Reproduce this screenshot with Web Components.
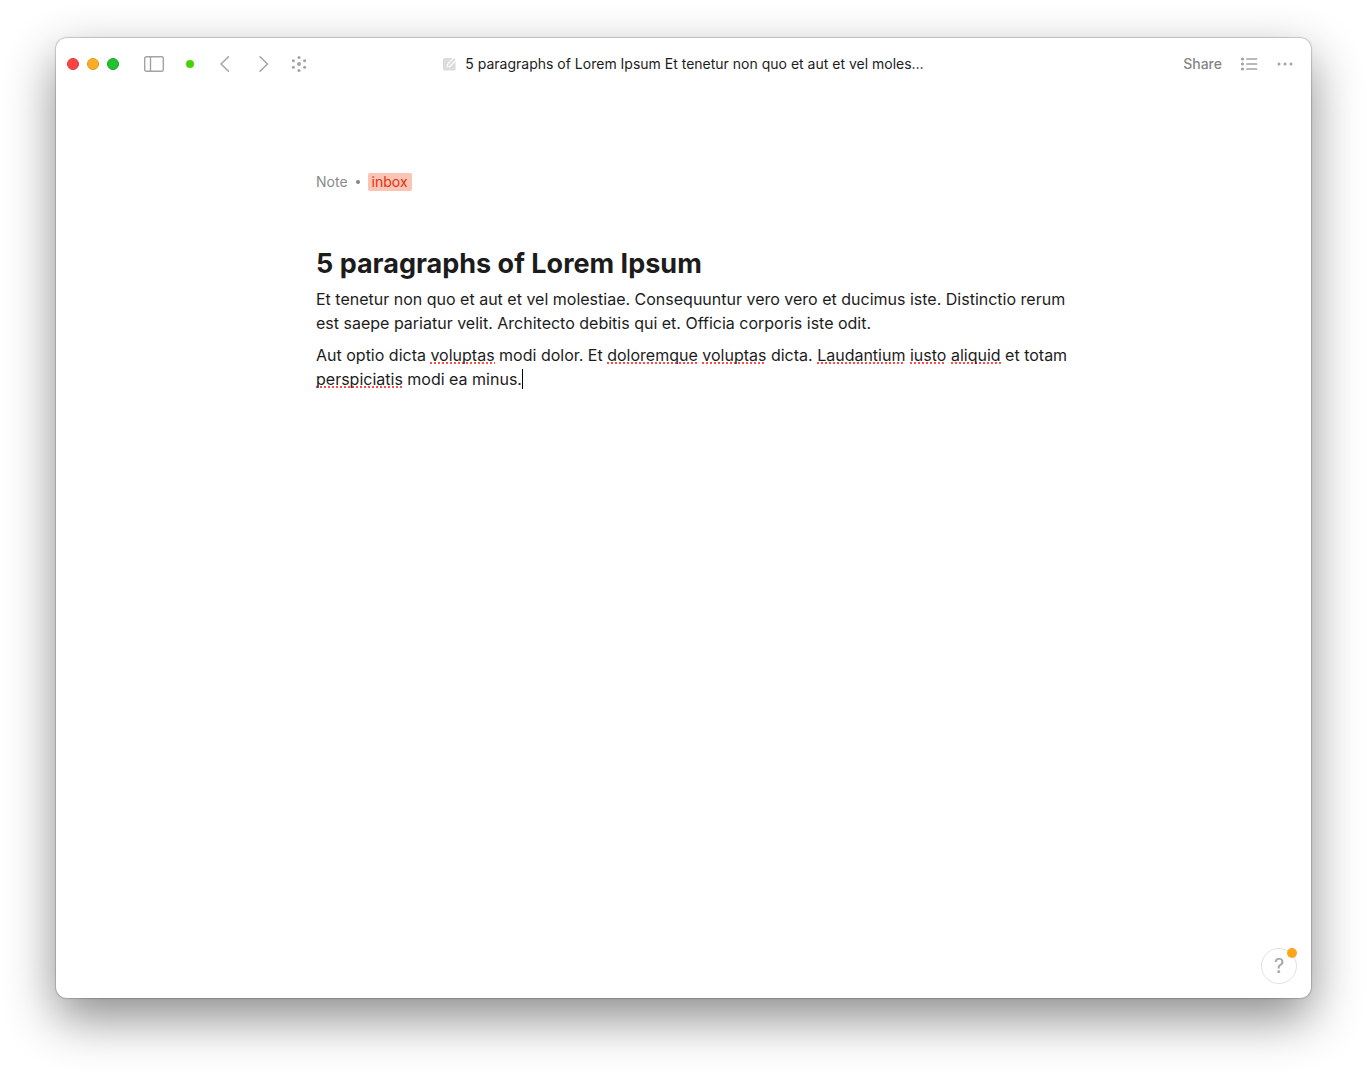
<!DOCTYPE html>
<html lang="en">
<head>
<meta charset="utf-8">
<meta name="viewport" content="width=device-width, initial-scale=1">
<title>5 paragraphs of Lorem Ipsum</title>
<style>
body {
  margin: 0;
  background: #fff;
  color: #1c1c1c;
  font-family: Inter, "Liberation Sans", sans-serif;
  font-size: 16px;
  line-height: 24px;
}
</style>
</head>
<body>
<app-window>
  <title-bar slot="bar">
    <traffic-lights slot="start"></traffic-lights>
    <nav-tools slot="start"></nav-tools>
    <doc-title>5 paragraphs of Lorem Ipsum Et tenetur non quo et aut et vel moles…</doc-title>
    <doc-actions slot="end"></doc-actions>
  </title-bar>
  <note-page>
    <note-meta slot="meta" data-type="Note" data-tag="inbox"></note-meta>
    <span slot="title">5 paragraphs of Lorem Ipsum</span>
    <note-paragraph>Et tenetur non quo et aut et vel molestiae. Consequuntur vero vero et ducimus iste. Distinctio rerum est saepe pariatur velit. Architecto debitis qui et. Officia corporis iste odit.</note-paragraph>
    <note-paragraph>Aut optio dicta <spell-error>voluptas</spell-error> modi dolor. Et <spell-error>doloremque</spell-error> <spell-error>voluptas</spell-error> dicta. <spell-error>Laudantium</spell-error> <spell-error>iusto</spell-error> <spell-error>aliquid</spell-error> et totam <spell-error>perspiciatis</spell-error> modi ea minus.<text-caret></text-caret></note-paragraph>
  </note-page>
  <help-button slot="help"></help-button>
</app-window>

<script>
const buttonStyles = `
button {
  display: flex;
  align-items: center;
  justify-content: center;
  margin: 0;
  padding: 0;
  border: 0;
  background: none;
  color: #a3a3a3;
  font: inherit;
}

svg {
  display: block;
}
`;

class AppWindow extends HTMLElement {
  constructor() {
    super();
    this.attachShadow({ mode: "open" });
  }

  connectedCallback() {
    this.shadowRoot.innerHTML = `
<style>
:host {
  display: flex;
  box-sizing: border-box;
  min-height: 100vh;
  padding: 38px 56px 74px;
  overflow: hidden;
}

.window {
  position: relative;
  display: flex;
  flex-direction: column;
  flex: 1;
  min-width: 0;
  background: #fff;
  border-radius: 11px;
  box-shadow: 0 0 1px 1px rgba(0, 0, 0, 0.18), 0 20px 50px rgba(0, 0, 0, 0.46);
}

.help {
  position: absolute;
  right: 14px;
  bottom: 14px;
}
</style>
<div class="window">
  <slot name="bar"></slot>
  <slot></slot>
  <div class="help"><slot name="help"></slot></div>
</div>
`;
  }
}

class TitleBar extends HTMLElement {
  constructor() {
    super();
    this.attachShadow({ mode: "open" });
  }

  connectedCallback() {
    this.shadowRoot.innerHTML = `
<style>
:host {
  display: block;
}

header {
  display: grid;
  grid-template-columns: 1fr auto 1fr;
  align-items: center;
  height: 52px;
  padding: 0 11px;
}

.start {
  display: flex;
  align-items: center;
  gap: 25px;
}

.end {
  display: flex;
  justify-content: flex-end;
  padding-right: 6px;
}
</style>
<header>
  <div class="start"><slot name="start"></slot></div>
  <slot></slot>
  <div class="end"><slot name="end"></slot></div>
</header>
`;
  }
}

class TrafficLights extends HTMLElement {
  constructor() {
    super();
    this.attachShadow({ mode: "open" });
  }

  connectedCallback() {
    this.shadowRoot.innerHTML = `
<style>
${buttonStyles}
:host {
  display: flex;
  gap: 8px;
}

button {
  box-sizing: border-box;
  width: 12px;
  height: 12px;
  border: 1px solid #e33536;
  border-radius: 50%;
  background: #fe4343;
}

.minimize {
  border-color: #e09a1d;
  background: #fdad24;
}

.zoom {
  border-color: #17a525;
  background: #24c131;
}
</style>
<button aria-label="Close"></button>
<button class="minimize" aria-label="Minimize"></button>
<button class="zoom" aria-label="Zoom"></button>
`;
  }
}

class NavTools extends HTMLElement {
  constructor() {
    super();
    this.attachShadow({ mode: "open" });
  }

  connectedCallback() {
    this.shadowRoot.innerHTML = `
<style>
${buttonStyles}
:host {
  display: flex;
  align-items: center;
}

.status {
  width: 8px;
  height: 8px;
  margin: 0 25px 0 22px;
  border-radius: 50%;
  background: #46d305;
}

.arrows {
  display: flex;
  gap: 22px;
  margin-right: 18px;
}
</style>
<button aria-label="Toggle sidebar">
  <svg width="20" height="16" viewBox="0 0 20 16" fill="none" stroke="currentColor" stroke-width="1.4">
    <rect x="0.7" y="0.7" width="18.6" height="14.6" rx="1.6"/>
    <path d="M6.5 1v14"/>
  </svg>
</button>
<span class="status"></span>
<div class="arrows">
  <button aria-label="Back">
    <svg width="16" height="18" viewBox="0 0 16 18" fill="none" stroke="currentColor" stroke-width="1.5" stroke-linecap="round" stroke-linejoin="round">
      <path d="M9.5 1.7L2 9l7.5 7.3"/>
    </svg>
  </button>
  <button aria-label="Forward">
    <svg width="16" height="18" viewBox="0 0 16 18" fill="none" stroke="currentColor" stroke-width="1.5" stroke-linecap="round" stroke-linejoin="round">
      <path d="M3 1.7L10.5 9 3 16.3"/>
    </svg>
  </button>
</div>
<button aria-label="Graph">
  <svg width="16" height="16" viewBox="0 0 16 16" fill="currentColor">
    <circle cx="8" cy="8" r="2"/>
    <circle cx="8" cy="1.6" r="1.5"/>
    <circle cx="8" cy="14.4" r="1.5"/>
    <circle cx="2.4" cy="4.8" r="1.5"/>
    <circle cx="13.6" cy="4.8" r="1.5"/>
    <circle cx="2.4" cy="11.2" r="1.5"/>
    <circle cx="13.6" cy="11.2" r="1.5"/>
  </svg>
</button>
`;
  }
}

class DocTitle extends HTMLElement {
  constructor() {
    super();
    this.attachShadow({ mode: "open" });
  }

  connectedCallback() {
    this.shadowRoot.innerHTML = `
<style>
:host {
  display: flex;
  align-items: center;
  gap: 8px;
  min-width: 0;
  font-size: 14px;
  line-height: 20px;
  white-space: nowrap;
}

svg {
  display: block;
}
</style>
<svg width="14" height="14" viewBox="0 0 14 14" aria-hidden="true">
  <rect x="0" y="1" width="12.6" height="12.4" rx="1.6" fill="#dcdcdc"/>
  <path d="M13.4 0.4L5 9.2" stroke="#fff" stroke-width="4.4"/>
  <path d="M4 10l.9-3 6.300-6.200 1.800 1.800L7 9z" fill="#dcdcdc" stroke="#fff" stroke-width="0.8"/>
</svg>
<span><slot></slot></span>
`;
  }
}

class DocActions extends HTMLElement {
  constructor() {
    super();
    this.attachShadow({ mode: "open" });
  }

  connectedCallback() {
    this.shadowRoot.innerHTML = `
<style>
${buttonStyles}
:host {
  display: flex;
  align-items: center;
  gap: 18px;
}

.share {
  color: #858585;
  font-size: 14px;
  font-weight: 500;
  line-height: 20px;
}
</style>
<button class="share">Share</button>
<button aria-label="Outline">
  <svg width="18" height="16" viewBox="0 0 18 16" fill="currentColor">
    <circle cx="2.5" cy="3" r="1.6"/>
    <circle cx="2.5" cy="8" r="1.6"/>
    <circle cx="2.5" cy="13" r="1.6"/>
    <path d="M7 3h9.500M7 8h9.500M7 13h9.500" stroke="currentColor" stroke-width="1.7" stroke-linecap="round"/>
  </svg>
</button>
<button aria-label="More">
  <svg width="18" height="16" viewBox="0 0 18 16" fill="currentColor">
    <circle cx="3" cy="8" r="1.5"/>
    <circle cx="9" cy="8" r="1.5"/>
    <circle cx="15" cy="8" r="1.5"/>
  </svg>
</button>
`;
  }
}

class NotePage extends HTMLElement {
  constructor() {
    super();
    this.attachShadow({ mode: "open" });
  }

  connectedCallback() {
    this.shadowRoot.innerHTML = `
<style>
:host {
  display: block;
  flex: 1;
  padding: 83px 24px;
}

article {
  max-width: 735px;
  margin: 0 auto;
}

h1 {
  margin: 53px 0 3px;
  font-size: 27px;
  font-weight: 700;
  line-height: 40px;
}

.body {
  display: flex;
  flex-direction: column;
  gap: 8px;
  margin-right: -24px;
}
</style>
<article>
  <slot name="meta"></slot>
  <h1><slot name="title"></slot></h1>
  <div class="body"><slot></slot></div>
</article>
`;
  }
}

class NoteMeta extends HTMLElement {
  constructor() {
    super();
    this.attachShadow({ mode: "open" });
  }

  connectedCallback() {
    this.shadowRoot.innerHTML = `
<style>
:host {
  display: flex;
  align-items: center;
  gap: 8px;
  color: #8a8a8a;
  font-size: 14px;
  line-height: 18px;
}

.dot {
  width: 4px;
  height: 4px;
  border-radius: 50%;
  background: #858585;
}

a {
  padding: 0 4px;
  border-radius: 2px;
  background: #fbc5b5;
  color: #e0310b;
  text-decoration: none;
}
</style>
<span>${this.getAttribute("data-type")}</span>
<span class="dot"></span>
<a href="#inbox">${this.getAttribute("data-tag")}</a>
`;
  }
}

class NoteParagraph extends HTMLElement {
  constructor() {
    super();
    this.attachShadow({ mode: "open" });
  }

  connectedCallback() {
    this.shadowRoot.innerHTML = `
<style>
:host {
  display: block;
}

p {
  margin: 0;
}
</style>
<p><slot></slot></p>
`;
  }
}

class SpellError extends HTMLElement {
  constructor() {
    super();
    this.attachShadow({ mode: "open" });
  }

  connectedCallback() {
    // Inline element: whitespace around the slot would show up as a space
    this.shadowRoot.innerHTML = `<style>
:host {
  background: repeating-linear-gradient(90deg, #fb4b4b 0 2px, transparent 2px 4px) left bottom 1px / 100% 2px no-repeat;
}
</style><slot></slot>`;
  }
}

class TextCaret extends HTMLElement {
  constructor() {
    super();
    this.attachShadow({ mode: "open" });
  }

  connectedCallback() {
    this.shadowRoot.innerHTML = `<style>
:host {
  display: inline-block;
  width: 1px;
  height: 20px;
  background: #000;
  vertical-align: -4px;
}
</style>`;
  }
}

class HelpButton extends HTMLElement {
  constructor() {
    super();
    this.attachShadow({ mode: "open" });
  }

  connectedCallback() {
    this.shadowRoot.innerHTML = `
<style>
${buttonStyles}
:host {
  display: block;
  position: relative;
}

button {
  box-sizing: border-box;
  width: 36px;
  height: 36px;
  border: 1px solid #e2e2e2;
  border-radius: 50%;
  background: #fff;
  font-size: 20px;
}

.badge {
  position: absolute;
  top: 0;
  right: 0;
  width: 10px;
  height: 10px;
  border-radius: 50%;
  background: #ffa51a;
}
</style>
<button aria-label="Help">?</button>
<span class="badge"></span>
`;
  }
}

// Register the custom elements
customElements.define("app-window", AppWindow);
customElements.define("title-bar", TitleBar);
customElements.define("traffic-lights", TrafficLights);
customElements.define("nav-tools", NavTools);
customElements.define("doc-title", DocTitle);
customElements.define("doc-actions", DocActions);
customElements.define("note-page", NotePage);
customElements.define("note-meta", NoteMeta);
customElements.define("note-paragraph", NoteParagraph);
customElements.define("spell-error", SpellError);
customElements.define("text-caret", TextCaret);
customElements.define("help-button", HelpButton);
</script>
</body>
</html>
